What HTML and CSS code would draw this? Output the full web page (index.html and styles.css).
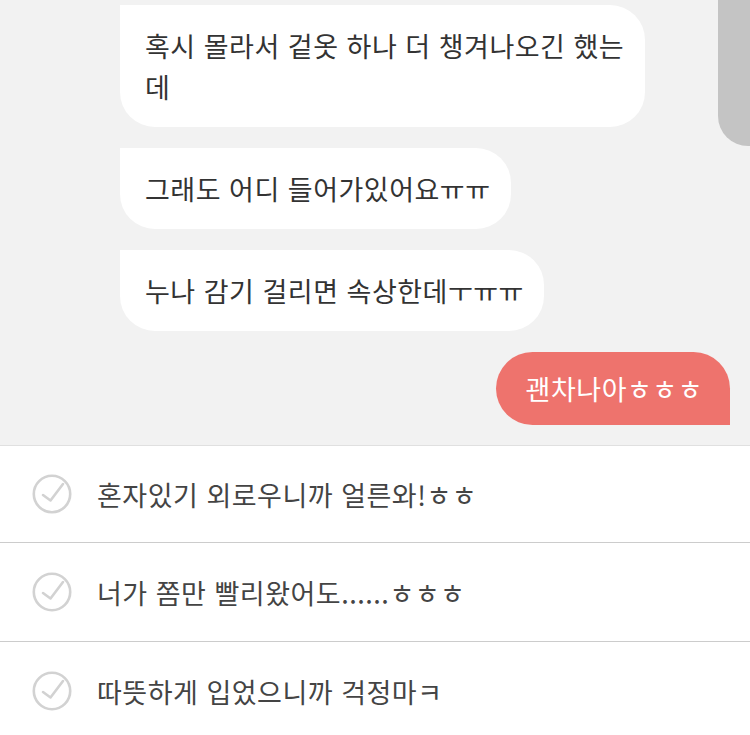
FILE: index.html
```html
<!DOCTYPE html>
<html lang="ko">
<head>
<meta charset="utf-8">
<link rel="stylesheet" href="styles.css">
</head>
<body>
<div class="chat">
  <div class="bubble recv">혹시 몰라서 겉옷 하나 더 챙겨나오긴 했는데</div>
  <div class="bubble recv">그래도 어디 들어가있어요ㅠㅠ</div>
  <div class="bubble recv">누나 감기 걸리면 속상한데ㅜㅠㅠ</div>
  <div class="bubble sent">괜차나아ㅎㅎㅎ</div>
</div>
<div class="scroll-handle"></div>
<div class="options">
  <div class="option">
    <svg class="check" viewBox="0 0 40 40" width="40" height="40"><circle cx="20" cy="20" r="18.2" fill="none" stroke="#d2d2d2" stroke-width="2.6"/><path d="M11 21 L18.5 26.5 L31 10" fill="none" stroke="#d2d2d2" stroke-width="2.6" stroke-linecap="round" stroke-linejoin="round"/></svg>
    <span class="opt-text">혼자있기 외로우니까 얼른와!ㅎㅎ</span>
  </div>
  <div class="option">
    <svg class="check" viewBox="0 0 40 40" width="40" height="40"><circle cx="20" cy="20" r="18.2" fill="none" stroke="#d2d2d2" stroke-width="2.6"/><path d="M11 21 L18.5 26.5 L31 10" fill="none" stroke="#d2d2d2" stroke-width="2.6" stroke-linecap="round" stroke-linejoin="round"/></svg>
    <span class="opt-text">너가 쫌만 빨리왔어도......ㅎㅎㅎ</span>
  </div>
  <div class="option">
    <svg class="check" viewBox="0 0 40 40" width="40" height="40"><circle cx="20" cy="20" r="18.2" fill="none" stroke="#d2d2d2" stroke-width="2.6"/><path d="M11 21 L18.5 26.5 L31 10" fill="none" stroke="#d2d2d2" stroke-width="2.6" stroke-linecap="round" stroke-linejoin="round"/></svg>
    <span class="opt-text">따뜻하게 입었으니까 걱정마ㅋ</span>
  </div>
</div>
</body>
</html>
```
FILE: styles.css
```css
html, body {
  margin: 0;
  padding: 0;
}
body {
  background: #f2f2f2;
  font-family: "Noto Sans CJK KR", "Noto Sans", sans-serif;
  width: 750px;
  height: 735px;
  overflow: hidden;
  position: relative;
}
.chat {
  display: flex;
  flex-direction: column;
  gap: 21px;
  padding: 5px 20px 20px 120px;
}
.bubble {
  font-size: 27px;
  letter-spacing: 0.5px;
  line-height: 41px;
  box-sizing: border-box;
}
.recv {
  align-self: flex-start;
  max-width: 525px;
  background: #ffffff;
  color: #333333;
  padding: 20px 20px 20px 25px;
  border-radius: 0 35px 35px 35px;
}
.sent {
  align-self: flex-end;
  background: #ee736d;
  color: #ffffff;
  padding: 16px 27px 16px 30px;
  border-radius: 37px 37px 0 37px;
}
.scroll-handle {
  position: absolute;
  top: 0;
  right: 0;
  width: 32px;
  height: 146px;
  background: #c4c4c4;
  border-bottom-left-radius: 30px;
}
.options {
  background: #ffffff;
  border-top: 1px solid #e0e0e0;
}
.option {
  display: flex;
  align-items: center;
  gap: 25px;
  height: 99px;
  padding-left: 32px;
  border-bottom: 1px solid #cccccc;
  box-sizing: border-box;
}
.option:first-child {
  height: 97px;
}
.check {
  flex: none;
  display: block;
}
.opt-text {
  font-size: 27px;
  letter-spacing: 0.5px;
  color: #444444;
}
```
